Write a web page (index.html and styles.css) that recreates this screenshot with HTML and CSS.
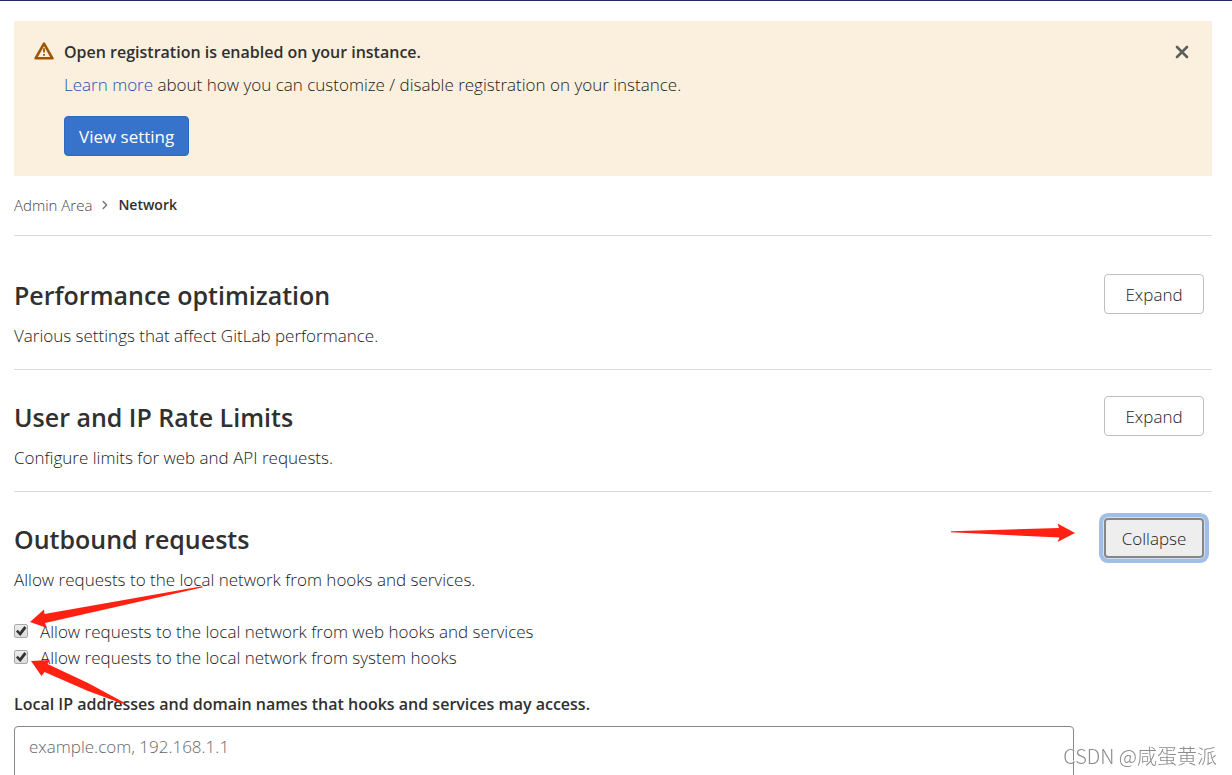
FILE: index.html
```html
<!DOCTYPE html>
<html lang="en">
<head>
<meta charset="utf-8">
<title>Network · Admin Area</title>
<link rel="stylesheet" href="styles.css">
</head>
<body>
<main class="page">
  <section class="alert">
    <svg class="alert-icon" viewBox="0 0 20 18" aria-hidden="true">
      <path d="M10 1.6 18.4 16.3H1.6Z" fill="none" stroke="#9e5400" stroke-width="2.6" stroke-linejoin="round"/>
      <path d="M10 6.2v4.3M10 12.1v1.7" fill="none" stroke="#9e5400" stroke-width="1.8"/>
    </svg>
    <div class="alert-body">
      <h2 class="alert-title">Open registration is enabled on your instance.</h2>
      <p class="alert-text"><a class="link" href="#">Learn more</a> about how you can customize / disable registration on your instance.</p>
      <button class="btn btn-primary" type="button">View setting</button>
    </div>
    <button class="close" type="button" aria-label="Dismiss">
      <svg class="close-icon" viewBox="0 0 14 14" aria-hidden="true"><path d="M2 2 12 12M12 2 2 12" fill="none" stroke="#5e5e5e" stroke-width="2.6" stroke-linecap="round"/></svg>
    </button>
  </section>

  <nav class="breadcrumbs" aria-label="Breadcrumb">
    <a class="crumb" href="#">Admin Area</a>
    <svg class="crumb-sep" viewBox="0 0 6 10" aria-hidden="true"><path d="M1.2 1.5 4.6 5 1.2 8.5" fill="none" stroke="#777" stroke-width="1.5" stroke-linecap="round" stroke-linejoin="round"/></svg>
    <a class="crumb crumb-current" href="#">Network</a>
  </nav>

  <section class="settings settings-first">
    <div class="settings-header">
      <div>
        <h1 class="settings-title">Performance optimization</h1>
        <p class="settings-text">Various settings that affect GitLab performance.</p>
      </div>
      <button class="btn btn-toggle" type="button">Expand</button>
    </div>
  </section>

  <section class="settings">
    <div class="settings-header">
      <div>
        <h1 class="settings-title">User and IP Rate Limits</h1>
        <p class="settings-text">Configure limits for web and API requests.</p>
      </div>
      <button class="btn btn-toggle" type="button">Expand</button>
    </div>
  </section>

  <section class="settings settings-open">
    <div class="settings-header">
      <div>
        <h1 class="settings-title">Outbound requests</h1>
        <p class="settings-text">Allow requests to the local network from hooks and services.</p>
      </div>
      <button class="btn btn-toggle btn-focused" type="button">Collapse</button>
      <svg class="arrow arrow-collapse" viewBox="0 0 126 20" aria-hidden="true"><path d="M1 8.2 109 5 107.5 .5 125 10 107.5 19 109.5 14.5 1 9.3Z" fill="#ff2213"/></svg>
    </div>

    <form class="settings-form">
      <div class="checks">
        <label class="check"><input class="check-box" type="checkbox" checked><span>Allow requests to the local network from web hooks and services</span></label>
        <label class="check"><input class="check-box" type="checkbox" checked><span>Allow requests to the local network from system hooks</span></label>
        <svg class="arrow arrow-checks" viewBox="0 0 176 120" aria-hidden="true">
          <path d="M0 37 14 24.5 14.5 29 172 1.2 173 2.2 15 38 17 43Z" fill="#ff2213"/>
          <path d="M1 76 20 75 17.5 79 58 98 95 118 92 118.5 58 106 14.5 87 11.5 91Z" fill="#ff2213"/>
        </svg>
      </div>
      <label class="field-label" for="allowlist">Local IP addresses and domain names that hooks and services may access.</label>
      <textarea class="field" id="allowlist" placeholder="example.com, 192.168.1.1"></textarea>
    </form>
  </section>
</main>
<div class="watermark">CSDN @咸蛋黄派</div>
</body>
</html>
```
FILE: styles.css
```css
* {
  box-sizing: border-box;
}

body {
  margin: 0;
  height: 100vh;
  overflow: hidden;
  border-top: 1px solid #292961;
  background: #fff;
  color: #1a1a1a;
  font-family: "Open Sans", "Noto Sans CJK SC", sans-serif;
  font-size: 17px;
  font-weight: 300;
  line-height: 26px;
}

h1, h2, p {
  margin: 0;
}

button, textarea {
  font: inherit;
  color: inherit;
}

.page {
  padding: 20px 20px 0 14px;
}

.alert {
  display: flex;
  align-items: flex-start;
  padding: 18px 20px 20px;
  background: #fbf0dd;
}

.alert-icon {
  width: 20px;
  height: 18px;
  margin: 3px 10px 0 0;
}

.alert-body {
  flex: 1;
}

.alert-title {
  margin-bottom: 7px;
  color: #303030;
  font-size: 16px;
  font-weight: 600;
}

.alert-text {
  margin-bottom: 18px;
}

.link {
  color: #1b4fb8;
  text-decoration: none;
}

.btn {
  height: 40px;
  padding: 1px 14px 0;
  border: 1px solid #bfbfbf;
  border-radius: 4px;
  background: #fff;
}

.btn-primary {
  border-color: #2f68bf;
  background: #3873cb;
  color: #fff;
  font-weight: 400;
}

.close {
  display: flex;
  margin-top: 6px;
  padding: 0;
  border: 0;
  background: none;
}

.close-icon {
  width: 14px;
  height: 14px;
  margin: 0 3px;
}

.breadcrumbs {
  display: flex;
  align-items: center;
  height: 60px;
  padding-bottom: 2px;
  border-bottom: 1px solid #dbdbdb;
  font-size: 15px;
}

.crumb {
  color: #444;
  text-decoration: none;
}

.crumb-sep {
  width: 6px;
  height: 10px;
  margin: 0 10px;
}

.crumb-current {
  color: #303030;
  font-size: 14px;
  font-weight: 600;
}

.settings {
  padding: 24px 0 20px;
  border-bottom: 1px solid #dbdbdb;
}

.settings-first {
  padding-top: 36px;
}

.settings-open {
  border-bottom: 0;
}

.settings-header {
  position: relative;
  display: flex;
  align-items: flex-start;
  justify-content: space-between;
  padding-right: 8px;
}

.settings-title {
  margin-bottom: 8px;
  padding-top: 3px;
  color: #303030;
  font-size: 25px;
  font-weight: 600;
  line-height: 40px;
}

.btn-toggle {
  width: 100px;
  margin-top: 2px;
}

.btn-focused {
  border: 2px solid #868686;
  background: #eee;
  box-shadow: 0 0 0 1px #d2dff2, 0 0 0 5px #a1bee7;
}

.settings-form {
  margin-top: 26px;
}

.checks {
  position: relative;
}

.check {
  display: flex;
  align-items: flex-start;
}

.check-box {
  appearance: none;
  display: grid;
  width: 14px;
  height: 14px;
  margin: 5px 12px 0 0;
  border: 1px solid #aaa;
  border-radius: 2px;
  background: linear-gradient(#ececec, #dcdcdc);
}

.check-box:checked::before {
  content: "";
  background: #333;
  clip-path: polygon(8% 55%, 24% 40%, 40% 58%, 78% 8%, 96% 24%, 44% 92%);
}

.field-label {
  display: block;
  margin: 20px 0 9px;
  color: #303030;
  font-size: 16px;
  font-weight: 600;
}

.field {
  display: block;
  width: 100%;
  max-width: 1060px;
  height: 160px;
  padding: 7px 14px;
  border: 1px solid #868686;
  border-radius: 4px;
  resize: none;
}

.field::placeholder {
  color: #666;
}

.arrow {
  position: absolute;
}

.arrow-collapse {
  top: 7px;
  right: 136px;
  width: 126px;
  height: 20px;
}

.arrow-checks {
  top: -34px;
  left: 16px;
  width: 176px;
  height: 120px;
}

.watermark {
  position: fixed;
  right: 15px;
  bottom: 6px;
  color: #8c8c8c;
  font-family: "Noto Sans CJK SC", sans-serif;
  font-size: 20px;
  font-weight: 300;
  text-shadow: -1px -1px 0 #fff;
}
```
